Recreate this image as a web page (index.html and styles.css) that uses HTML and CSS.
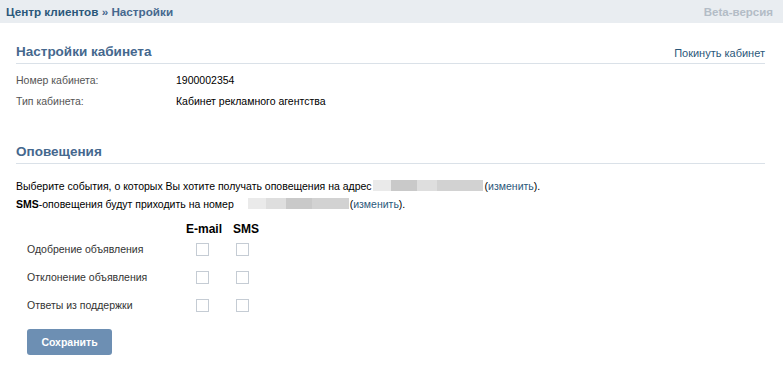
FILE: index.html
```html
<!DOCTYPE html>
<html lang="ru">
<head>
  <meta charset="UTF-8" />
  <title>Настройки</title>
  <link rel="stylesheet" href="styles.css">
</head>
<body>
  <div class="topbar">
    <div class="crumbs"><a href="#">Центр клиентов</a> » Настройки</div>
    <div class="beta">Beta-версия</div>
  </div>

  <div class="content">
    <div class="section-head first">
      <h2>Настройки кабинета</h2>
      <a href="#" class="head-link">Покинуть кабинет</a>
    </div>
    <div class="info-row"><span class="info-label">Номер кабинета:</span><span>1900002354</span></div>
    <div class="info-row"><span class="info-label">Тип кабинета:</span><span>Кабинет рекламного агентства</span></div>

    <div class="section-head">
      <h2>Оповещения</h2>
    </div>
    <p class="notice">
      Выберите события, о которых Вы хотите получать оповещения на адрес<span class="blur blur-mail"><i class="b1"></i><i class="b2"></i><i class="b3"></i><i class="b4"></i></span>(<a href="#">изменить</a>).<br>
      <b>SMS</b>-оповещения будут приходить на номер <span class="blur blur-phone"><i class="b1"></i><i class="b3"></i><i class="b2"></i><i class="b4"></i></span>(<a href="#">изменить</a>).
    </p>

    <div class="events">
      <div class="ev-head"><span class="ev-head-label"></span><span class="ev-head-col">E-mail</span><span class="ev-head-col">SMS</span></div>
      <div class="ev-row"><span class="ev-label">Одобрение объявления</span><i class="check"></i><i class="check"></i></div>
      <div class="ev-row"><span class="ev-label">Отклонение объявления</span><i class="check"></i><i class="check"></i></div>
      <div class="ev-row"><span class="ev-label">Ответы из поддержки</span><i class="check"></i><i class="check"></i></div>
      <button class="save">Сохранить</button>
    </div>
  </div>
</body>
</html>
```

FILE: styles.css
```css
body {
  font-family: 'Liberation Sans', Arial, sans-serif;
  font-size: 10.5px;
  color: #000;
  background-color: #fff;
  margin: 0;
}
a {
  color: #2b587a;
  text-decoration: none;
}
.topbar {
  height: 23px;
  background-color: #e9edf1;
  padding: 0 10px 0 6px;
  display: flex;
  justify-content: space-between;
  align-items: center;
  font-weight: bold;
  font-size: 11.7px;
}
.crumbs {
  color: #45688e;
}
.crumbs a {
  color: #2b587a;
}
.beta {
  color: #b3bcc6;
  font-size: 11.5px;
}
.content {
  padding: 0 18px 0 16px;
}
.section-head {
  display: flex;
  justify-content: space-between;
  align-items: flex-end;
  border-bottom: 1px solid #dae1e8;
  margin-top: 33px;
  margin-bottom: 5px;
  padding-bottom: 3px;
}
.section-head.first {
  margin-top: 21px;
}
h2 {
  margin: 0;
  font-size: 13.5px;
  line-height: 16px;
  color: #45688e;
}
.head-link {
  font-size: 11px;
  padding-bottom: 1px;
}
.info-row {
  display: flex;
  height: 21px;
  align-items: center;
}
.info-label {
  width: 160px;
  color: #555;
}
.notice {
  margin: 13px 0 0;
  line-height: 18px;
}
.blur {
  display: inline-flex;
  height: 11px;
  vertical-align: -1px;
}
.blur i {
  display: block;
  height: 11px;
}
.blur .b1 { width: 18px; background: #eaeaea; }
.blur .b2 { width: 26px; background: #c9c9c9; }
.blur .b3 { width: 20px; background: #dedede; }
.blur .b4 { width: 22px; background: #d2d2d2; }
.blur-mail {
  width: 110px;
  margin: 0 2px 0 1px;
}
.blur-mail i:last-child { flex: 1; }
.blur-phone {
  width: 101px;
  margin: 0 1px 0 11px;
}
.blur-phone i:last-child { flex: 1; }
.events {
  margin-top: 10px;
  padding-left: 11px;
}
.ev-head {
  display: flex;
  align-items: center;
  height: 12px;
  font-weight: bold;
  font-size: 12px;
}
.ev-head-label {
  width: 159px;
}
.ev-head-col:nth-child(2) {
  margin-right: 11px;
}
.ev-row {
  display: flex;
  align-items: center;
  height: 28px;
}
.ev-label {
  width: 169px;
  color: #333;
}
.check {
  width: 11px;
  height: 11px;
  border: 1px solid #c5ccd4;
  margin-right: 27px;
}
.save {
  margin-top: 10px;
  width: 85px;
  height: 26px;
  background-color: #6d8fb3;
  border: none;
  border-radius: 3px;
  color: #fff;
  font-family: 'Liberation Sans', Arial, sans-serif;
  font-weight: bold;
  font-size: 10.5px;
  cursor: pointer;
}
```
